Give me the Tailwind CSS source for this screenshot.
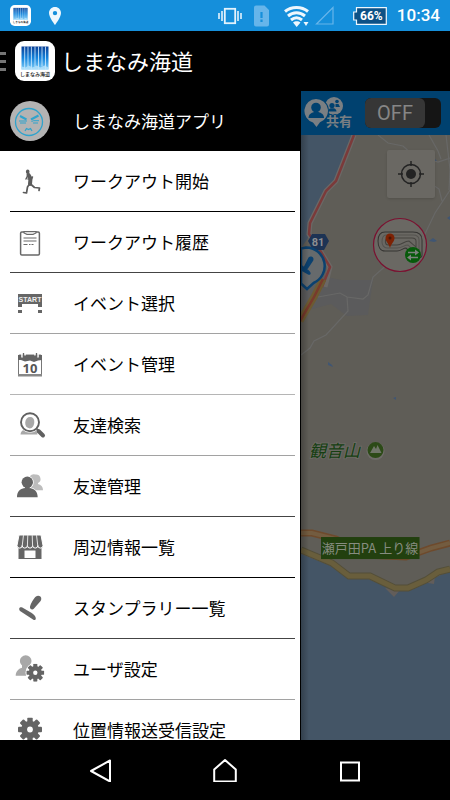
<!DOCTYPE html>
<html lang="ja">

<head>
    <meta charset="UTF-8">
    <meta name="viewport" content="width=device-width, initial-scale=1">
    <title>しまなみ海道</title>
    <script src="https://cdn.jsdelivr.net/npm/@tailwindcss/browser@4"></script>
</head>

<body class="flex flex-col h-screen overflow-hidden bg-black font-['Noto_Sans_CJK_JP',sans-serif]">

    <!-- Shared symbols -->
    <svg class="absolute w-0 h-0" aria-hidden="true">
        <linearGradient id="sea" x1="0" y1="0" x2="0" y2="1">
            <stop offset="0" stop-color="#0a3f96" />
            <stop offset=".5" stop-color="#1484dc" />
            <stop offset="1" stop-color="#7fcdf8" />
        </linearGradient>
        <symbol id="app-logo" viewBox="0 0 40 40">
            <rect width="40" height="40" rx="9" fill="#fff" />
            <rect x="6.500" y="5.500" width="27" height="23" fill="url(#sea)" />
            <path d="M9.700 5.500v23M13 5.500v20M16.400 5.500v23M20 5.500v20M23.500 5.500v23M27 5.500v20M30.500 5.500v23" stroke="#d9f0ff" stroke-width=".8" />
            <path d="M6.500 28.500v-3l4 1 3-2 4 2 4-2 4 2 4-2 4 2v2z" fill="#b9e4fb" opacity=".8" />
            <text x="20" y="35" font-size="5" font-weight="500" text-anchor="middle" fill="#111">しまなみ海道</text>
        </symbol>
        <symbol id="gear" viewBox="-12 -12 24 24">
            <g fill="#646464">
                <circle r="8.800" />
                <rect x="-2.700" y="-12" width="5.400" height="24" rx="1" />
                <rect x="-2.700" y="-12" width="5.400" height="24" rx="1" transform="rotate(45)" />
                <rect x="-2.700" y="-12" width="5.400" height="24" rx="1" transform="rotate(90)" />
                <rect x="-2.700" y="-12" width="5.400" height="24" rx="1" transform="rotate(135)" />
            </g>
            <circle r="2.900" fill="#fff" />
        </symbol>
    </svg>

    <!-- Status bar -->
    <div class="flex items-center shrink-0 h-[31px] px-[10px] bg-[#158fdb] text-white">
        <svg class="w-[21px] h-[21px]"><use href="#app-logo" /></svg>
        <svg class="w-3 h-[18px] ml-[18px]" viewBox="0 0 12 18">
            <path d="M6 0C2.500 0 0 2.700 0 6c0 4.400 6 12 6 12s6-7.600 6-12c0-3.300-2.500-6-6-6zm0 3.900a2.200 2.200 0 1 1 0 4.400 2.200 2.200 0 0 1 0-4.400z" fill="#eef7fd" fill-rule="evenodd" />
        </svg>
        <div class="flex items-center ml-auto">
            <svg class="w-6 h-[18px]" viewBox="0 0 24 18" fill="none" stroke="#e3f2fc">
                <rect x="6.800" y="1.800" width="10.400" height="14.400" stroke-width="1.800" />
                <path d="M4 4v10M1 6v6M20 4v10M23 6v6" stroke-width="1.600" />
            </svg>
            <svg class="w-4 h-[22px] ml-3" viewBox="0 0 16 22">
                <path d="M2 .5h8.500L15 5v14.500a2 2 0 0 1-2 2H2a2 2 0 0 1-2-2v-17a2 2 0 0 1 2-2z" fill="#66b5ea" />
                <path d="M7.500 7v6M7.500 14.500v2.500" stroke="#158fdb" stroke-width="2.200" />
            </svg>
            <svg class="w-[25px] h-[22px] ml-[14px]" viewBox="0 0 25 22">
                <g fill="none" stroke="#eef7fd" stroke-width="3">
                    <path d="M1 6.500c6.500-5.500 16.500-5.500 23 0" />
                    <path d="M4 11c5-4.300 12-4.300 17 0" />
                    <path d="M7 15c3.500-2.900 7.500-2.900 11 0" />
                </g>
                <path d="M9 17.500c2-1.600 5.500-1.600 7.500 0l-3.800 4.500zM19.500 17h5l-2.500 4z" fill="#eef7fd" />
            </svg>
            <svg class="w-[19px] h-[19px] ml-[6px]" viewBox="0 0 19 19">
                <path d="M1.500 18H18V1.500z" fill="none" stroke="#66b5ea" stroke-width="1.200" />
            </svg>
            <div class="relative flex items-center justify-center w-[34px] h-[18px] ml-[19px]">
                <svg class="absolute inset-0 w-full h-full" viewBox="0 0 34 18">
                    <path d="M3.500.7h29.800v16.600H3.500V13H.7V5h2.800z" fill="#0d5186" stroke="#eef7fd" stroke-width="1.200" />
                </svg>
                <span class="relative pl-[3px] font-['Roboto',sans-serif] text-xs font-bold leading-none">66%</span>
            </div>
            <span class="ml-[10px] font-['Roboto',sans-serif] text-[17px] font-medium leading-none">10:34</span>
        </div>
    </div>

    <!-- App bar -->
    <header class="flex items-center shrink-0 h-[60px] text-white">
        <button class="flex flex-col gap-[5px] w-[15px]" aria-label="メニュー">
            <span class="w-[6px] h-[3px] bg-[#757575]"></span>
            <span class="w-[6px] h-[3px] bg-[#757575]"></span>
            <span class="w-[6px] h-[3px] bg-[#757575]"></span>
        </button>
        <svg class="w-10 h-10"><use href="#app-logo" /></svg>
        <h1 class="ml-[6px] pb-[2px] text-[22px] leading-8">しまなみ海道</h1>
    </header>

    <main class="flex flex-1 min-h-0">

        <!-- Drawer -->
        <nav class="w-2/3 overflow-hidden bg-white text-[17px] leading-5 text-black">
            <a href="#" class="flex items-center gap-[23px] h-[60px] pl-[10px] bg-black text-white">
                <svg class="w-10 h-10" viewBox="0 0 40 40">
                    <circle cx="20" cy="20" r="20" fill="#b3b3b3" />
                    <g fill="none" stroke="#2fa3cd" stroke-width="1.300">
                        <circle cx="19" cy="21" r="13.500" />
                        <path d="M10 15l6.500 3.500M28.500 14.500L21 18.500" stroke-width="2" />
                        <path d="M9 20h8M21.500 20.500l2-.8h5.500M10 22h6M23 22h5" stroke-width="1" />
                        <path d="M15 30l1.500-2.500 2 1 2-1L22 30" />
                    </g>
                </svg>
                しまなみ海道アプリ
            </a>
            <ul class="ml-[10px] mr-[5px]">
                <li class="border-b border-black">
                    <a href="#" class="flex items-center gap-[23px] h-[60px]">
                        <svg class="w-10 h-10" viewBox="0 0 40 40" fill="none" stroke="#5c5c5c" stroke-linecap="round" stroke-linejoin="round">
                            <ellipse cx="17.700" cy="10.700" rx="1.800" ry="2.300" fill="#5c5c5c" stroke="none" />
                            <path d="M18.500 14l2 3.500-.5 5.500" stroke-width="4" />
                            <path d="M17.500 15l-1.500 3M18 18h3.500l1-2" stroke-width="1.500" />
                            <path d="M20.500 23l4 3.500 5 .5-.5 2.500" stroke-width="1.700" />
                            <path d="M19.500 23l-2 3-1 6-3-.5" stroke-width="1.700" />
                        </svg>
                        ワークアウト開始
                    </a>
                </li>
                <li class="border-b border-[#444]">
                    <a href="#" class="flex items-center gap-[23px] h-[60px]">
                        <svg class="w-10 h-10" viewBox="0 0 40 40" fill="none" stroke="#686868">
                            <rect x="10.600" y="10" width="18.800" height="23" rx="1.200" stroke-width="1.500" />
                            <path d="M14 9.500h12v1.500l-3 1.500h-6L14 11z" fill="#ddd" stroke-width="1.200" />
                            <path d="M13.500 16h13M13.500 19h13" stroke-width="1.200" />
                            <path d="M13.500 22.500h4m1.500 0h1.500m1 0h2" stroke-width="1.200" />
                        </svg>
                        ワークアウト履歴
                    </a>
                </li>
                <li class="border-b border-[#a2a2a2]">
                    <a href="#" class="flex items-center gap-[23px] h-[60px]">
                        <svg class="w-10 h-10" viewBox="0 0 40 40">
                            <path d="M8 11h24v13h-4v-3H12v3H8zM8 27h4v3H8zM28 27h4v3h-4z" fill="#666" />
                            <text x="20" y="18.500" font-family="Liberation Sans, sans-serif" font-size="7" font-weight="700" text-anchor="middle" fill="#eee">START</text>
                        </svg>
                        イベント選択
                    </a>
                </li>
                <li class="border-b border-[#b5b5b5]">
                    <a href="#" class="flex items-center gap-[23px] h-[60px]">
                        <svg class="w-10 h-10" viewBox="0 0 40 40">
                            <rect x="8.500" y="11" width="23" height="20" rx="1" fill="#fff" stroke="#777" />
                            <path d="M8 11h24v5l-4 .5-4 1.500-4-1.500-5 1-4-1.500H8z" fill="#646464" />
                            <path d="M8 30h24v2.500H8z" fill="#888" />
                            <path d="M12 8.500v5M15 8.500v3M25 8.500v3M28 8.500v5" stroke="#fff" stroke-width="1.500" />
                            <path d="M13.500 9v4M26.500 9v4" stroke="#646464" stroke-width="1.300" />
                            <text x="20" y="28.500" font-family="Open Sans, sans-serif" font-size="13" font-weight="700" text-anchor="middle" fill="#555">10</text>
                        </svg>
                        イベント管理
                    </a>
                </li>
                <li class="border-b border-[#a2a2a2]">
                    <a href="#" class="flex items-center gap-[23px] h-[60px]">
                        <svg class="w-10 h-10" viewBox="0 0 40 40">
                            <path d="M10.500 29.500c.5-4 3-5.500 9-6 5 .5 7.500 2 8 6z" fill="#a8a8a8" />
                            <circle cx="20" cy="17.300" r="10.500" fill="#fff" />
                            <path d="M20 12c3 0 4.500 2 4.300 5 0 3-1.800 6.500-4.500 6.500-3-.5-4.800-2.500-4.600-6 .3-3.500 2.200-5.500 4.800-5.500z" fill="#a8a8a8" />
                            <circle cx="20" cy="17.300" r="9" fill="none" stroke="#606060" stroke-width="1.900" />
                            <path d="M26.800 24l1.500 1.500" stroke="#606060" stroke-width="2" />
                            <path d="M28.500 26l4.500 4.500" stroke="#606060" stroke-width="4" stroke-linecap="round" />
                        </svg>
                        友達検索
                    </a>
                </li>
                <li class="border-b border-[#444]">
                    <a href="#" class="flex items-center gap-[23px] h-[60px]">
                        <svg class="w-10 h-10" viewBox="0 0 40 40">
                            <path d="M25.500 8.500a4.500 4.500 0 0 1 2.500 8.500v1c3 1 5 2.500 5 6.300H20V10a5 5 0 0 1 5.500-1.500z" fill="#bdbdbd" />
                            <path d="M14.500 20h5.500v2c4.500 1 7.700 3.500 7.700 9.300H7C7 25.500 10 23 14.500 22z" fill="#646464" stroke="#fff" stroke-width="1.500" paint-order="stroke" />
                            <circle cx="17.300" cy="16.300" r="5.700" fill="#646464" stroke="#fff" stroke-width="1.500" paint-order="stroke" />
                            <path d="M15 19h4.700v4H15z" fill="#646464" />
                        </svg>
                        友達管理
                    </a>
                </li>
                <li class="border-b border-black">
                    <a href="#" class="flex items-center gap-[23px] h-[60px]">
                        <svg class="w-10 h-10" viewBox="0 0 40 40">
                            <path d="M8.500 19h23v13h-23z" fill="#666" />
                            <path d="M9 8h22l2 10.500a2.600 2.600 0 0 1-5.200 0 2.600 2.600 0 0 1-5.200 0 2.600 2.600 0 0 1-5.200 0 2.600 2.600 0 0 1-5.200 0 2.600 2.600 0 0 1-5.200 0z" fill="#666" stroke="#fff" stroke-width="1" />
                            <path d="M13.500 8l-1.300 11M17.800 8l-.4 11M22.200 8l.4 11M26.500 8l1.300 11" stroke="#e4e4e4" stroke-width="1" />
                            <path d="M14.500 23.500h11V31h-11z" fill="#fff" />
                        </svg>
                        周辺情報一覧
                    </a>
                </li>
                <li class="border-b border-[#444]">
                    <a href="#" class="flex items-center gap-[23px] h-[60px]">
                        <svg class="w-10 h-10" viewBox="0 0 40 40" fill="#666">
                            <path d="M26 8.500c2-1.500 5.500-.5 5.300 2.500-.2 1.500-1 2.500-2 3.500l-5.500 6.300c-1.500 1.400-4.300.2-3.800-2 1-3.800 3.500-8.300 6-10.300z" />
                            <path d="M9.300 20.500c.3-1.300 1.500-1.500 3-1l9 5.300c2.500 1.700 4.700 3.700 4.500 5.700-.3 2-1.500 1.800-2.800 1l-12.200-8c-1.200-.8-1.800-1.700-1.500-3z" />
                        </svg>
                        スタンプラリー一覧
                    </a>
                </li>
                <li class="border-b border-[#a2a2a2]">
                    <a href="#" class="flex items-center gap-[23px] h-[60px]">
                        <svg class="w-10 h-10" viewBox="0 0 40 40">
                            <circle cx="15.700" cy="12" r="5.800" fill="#a8a8a8" />
                            <path d="M5.700 26.700c0-4 2.500-7 6.300-8V16h7v2l1 8.700z" fill="#a8a8a8" />
                            <circle cx="25.300" cy="23.700" r="9.800" fill="#fff" />
                            <use href="#gear" x="16.300" y="14.700" width="18" height="18" />
                        </svg>
                        ユーザ設定
                    </a>
                </li>
                <li>
                    <a href="#" class="flex items-center gap-[23px] h-[60px]">
                        <svg class="w-10 h-10" viewBox="0 0 40 40"><use href="#gear" x="8" y="7.500" width="24" height="24" /></svg>
                        位置情報送受信設定
                    </a>
                </li>
            </ul>
        </nav>

        <!-- Dimmed map screen -->
        <section class="flex flex-col flex-1 min-w-0 border-l border-black">
            <div class="flex items-center justify-between shrink-0 h-11 pl-[3px] pr-[9px] bg-[#00416f]">
                <button class="w-12 h-9" aria-label="共有">
                    <svg class="w-12 h-9" viewBox="0 0 48 36">
                        <circle cx="30" cy="11" r="9" fill="#7a7f83" />
                        <g fill="#00416f">
                            <circle cx="28" cy="10.500" r="2.600" />
                            <path d="M24 16.500c0-2 1.500-3 3-3.300h2.500c1.500.3 3 1.300 3 3.300z" />
                            <circle cx="33" cy="6.500" r="1.800" />
                            <path d="M31.500 9h3l1.500 3h-4.500z" />
                        </g>
                        <circle cx="12" cy="16" r="13" fill="#00416f" />
                        <path d="M12 4a12 12 0 0 1 4 23.300L12.500 32 9 27.500A12 12 0 0 1 12 4z" fill="#7a7f83" />
                        <g fill="#00416f">
                            <circle cx="12" cy="12.500" r="4.800" />
                            <path d="M4.500 23c0-3.500 2.500-5 5.500-6h4.500c3 1 5.500 2.500 5.500 6z" />
                        </g>
                        <text x="35" y="31" font-size="13" font-weight="700" text-anchor="middle" fill="#7a7f83" stroke="#00416f" stroke-width="1.500" paint-order="stroke">共有</text>
                    </svg>
                </button>
                <button role="switch" aria-checked="false" class="w-[76px] h-[30px] rounded-md bg-[#151515]">
                    <span class="flex items-center justify-center w-[60px] h-full rounded-md bg-[#363636] font-['Roboto',sans-serif] text-xl text-[#868686]">OFF</span>
                </button>
            </div>

            <div class="relative flex-1 min-h-0 bg-[#5f5d57]">
                <svg class="absolute inset-0 w-full h-full" viewBox="301 135 149 605" preserveAspectRatio="xMinYMin slice" fill="none">
                    <!-- land and sea -->
                    <rect x="301" y="135" width="400" height="605" fill="#5f5d57" />
                    <path d="M301 272l40 8h32l-5 35-21 1-16-12-30 8z" fill="#5b5b5c" />
                    <path d="M301 135h52l-17 45-11 12-17 34v12l-7 10z" fill="#445566" />
                    <path d="M301 554l30 12 17 13h20l26 11 14 1 20-10 22-10h200v174H301z" fill="#445566" />
                    <path d="M385 588l9 9 6-7zM422 582l12 2 1-8z" fill="#625d5a" />
                    <!-- minor roads -->
                    <g stroke="#686867" stroke-width="1.200">
                        <path d="M378 135l10 8 15 3 11 10 15 3 9 3 12-4M429 135l9 16 3 8M446 135l4 35-1 20M450 190l-15 23-11 23-11 20M430 183l9 6 3 12M390 262l-17 15-5 18-5 4-16-2-7-4-22 4M347 297l1 14-22 24-12 6-4 7-9 7" />
                    </g>
                    <!-- main roads -->
                    <path d="M354 135l-18 46-10 10-16 32-1 11 12 18 9 15-5 20" stroke="#6b6866" stroke-width="5" />
                    <path d="M354 135l-18 46-10 10-16 32-1 11 12 18 9 15-8 20" stroke="#7b3a3a" stroke-width="2.500" />
                    <path d="M323 279l-9 18-14 24" stroke="#6d5a31" stroke-width="7" />
                    <path d="M323 279l-9 18-14 24" stroke="#793a2c" stroke-width="2.500" />
                    <path d="M301 533h11l24 6 30 16 40 2 25-9 19-5" stroke="#6e4a2c" stroke-width="7" />
                    <path d="M301 533h11l24 6 30 16 40 2 25-9 19-5" stroke="#735c40" stroke-width="4" />
                    <path d="M301 550l31 13 17 13h21l25 12h13l18-8 12-8 12-3" stroke="#544f39" stroke-width="7" />
                    <path d="M301 550l31 13 17 13h21l25 12h13l18-8 12-8 12-3" stroke="#695e3c" stroke-width="5" />
                    <!-- ponds -->
                    <path d="M328 362l4 3 1 2-5-2zM393 398l3-1v3zM429 241l4-3 4 3-3 1zM447 218l3-2v4zM429 160l5-2 3 3z" fill="#405673" />
                    <!-- route shield -->
                    <path d="M312 234h13l4 7-5 9h-11l-5-9z" fill="#1d3354" />
                    <text x="318" y="246" font-family="Roboto, sans-serif" font-size="11" font-weight="700" text-anchor="middle" fill="#8b8e91">81</text>
                    <!-- stamp rally marker -->
                    <path d="M306 247.500a18.500 18.500 0 0 1 7.500 35.500l-6.500 6-6-5.500v-35z" fill="#666a6c" stroke="#0b416f" stroke-width="2.500" />
                    <path d="M308.500 257.500c2-2 6-.5 4.800 3l-5.300 8c-2 2-5 .5-4-2zM301 264.500l8 6c3 3 1.500 5-1 4l-7-4z" fill="#0b416f" />
                    <!-- course marker -->
                    <circle cx="400" cy="245" r="26.500" fill="#6a6863" stroke="#7b1030" stroke-width="1.200" />
                    <g stroke-width="1">
                        <path d="M385 232h28c6 0 9 3 9 8v15c0 3-4 4-7 1l-9-8c-3 0-5 3-9 3h-12c-5 0-7-5-7-10s2-9 7-9z" stroke="#353432" />
                        <path d="M386 235h27c4 0 6 2 6 5v12c0 2-2 2-4 0l-7-7c-4 0-6 3-11 3h-10c-3 0-5-3-5-6s1-7 4-7z" stroke="#55534f" />
                        <path d="M388 238h24c3 0 4 1 4 3v6l-7-6c-5 0-7 4-12 4h-9c-3 0-4-6 0-7z" stroke="#45433f" />
                    </g>
                    <path d="M390 248c-1-4-4.500-6.500-4.500-10a4.500 4.500 0 0 1 9 0c0 3.500-3.500 6-4.500 10z" fill="#7d2204" />
                    <circle cx="390" cy="238" r="1.500" fill="#4b1504" />
                    <circle cx="413" cy="255" r="8" fill="#075a0b" />
                    <path d="M408 252.500h9M418 257.500h-9" stroke="#7d837d" stroke-width="1.500" />
                    <path d="M415 249.500l4 3-4 3zM411 254.500l-4 3 4 3z" fill="#7d837d" />
                    <!-- mountain -->
                    <text x="309" y="457" font-size="17" font-style="italic" text-anchor="start" fill="#153f12" stroke="#6b6963" stroke-width="2" paint-order="stroke">観音山</text>
                    <circle cx="375.500" cy="451" r="9" fill="#6e6c68" />
                    <circle cx="375.500" cy="450" r="8" fill="#2c4a17" />
                    <path d="M370 453l4-7 2 3 1.500-4 4 8z" fill="#6f7568" />
                    <!-- parking area label -->
                    <rect x="321" y="537" width="98.500" height="22" fill="#22400f" />
                    <text x="370" y="553" font-size="13" text-anchor="middle" fill="#868c80">瀬戸田PA 上り線</text>
                </svg>
                <div class="absolute inset-y-0 left-0 w-2 bg-linear-to-r from-black/25 to-transparent"></div>
                <button class="absolute top-[15px] right-[15px] flex items-center justify-center w-12 h-12 rounded-xs bg-[#6a6863] shadow" aria-label="現在地">
                    <svg class="w-7 h-7" viewBox="0 0 28 28" fill="none" stroke="#232323">
                        <circle cx="14" cy="14" r="9.500" stroke-width="1.500" />
                        <circle cx="14" cy="14" r="5" fill="#232323" stroke="none" />
                        <path d="M14 1v5M14 22v5M1 14h5M22 14h5" stroke-width="1.500" />
                    </svg>
                </button>
            </div>
        </section>
    </main>

    <!-- Navigation bar -->
    <footer class="grid grid-cols-3 shrink-0 h-[60px] px-[37px]">
        <button class="flex items-center justify-center" aria-label="戻る">
            <svg class="w-6 h-6" viewBox="0 0 24 24" fill="none" stroke="#fff" stroke-width="2" stroke-linejoin="round"><path d="M22 2.500v21L3 13z" /></svg>
        </button>
        <button class="flex items-center justify-center" aria-label="ホーム">
            <svg class="w-6 h-6" viewBox="0 0 24 24" fill="none" stroke="#fff" stroke-width="2" stroke-linejoin="round"><path d="M12 2L1.200 11.500v12h21.600v-12z" /></svg>
        </button>
        <button class="flex items-center justify-center" aria-label="履歴">
            <svg class="w-6 h-6" viewBox="0 0 24 24" fill="none" stroke="#fff" stroke-width="2"><path d="M3 4.500h18v18H3z" /></svg>
        </button>
    </footer>
</body>

</html>
